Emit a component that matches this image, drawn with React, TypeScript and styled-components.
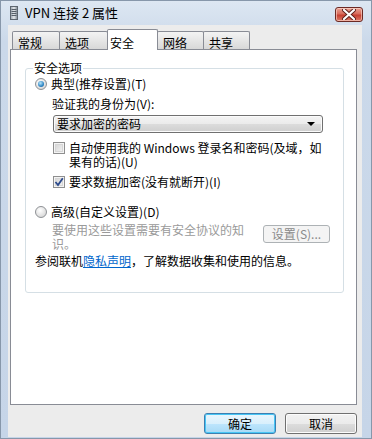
import * as React from "react";
import styled, { createGlobalStyle } from "styled-components";

const GlobalStyle = createGlobalStyle`
  html, body {
    margin: 0;
    padding: 0;
  }
  body {
    width: 372px;
    height: 439px;
    overflow: hidden;
    font-family: "Noto Sans CJK SC", "Liberation Sans", sans-serif;
    font-size: 12px;
    color: #000;
  }
`;

const tabs = [
  { label: "常规", width: 48 },
  { label: "选项", width: 49 },
  { label: "安全", width: 51, active: true },
  { label: "网络", width: 47 },
  { label: "共享", width: 47 },
];

const App = () => {
  return (
    <>
      <GlobalStyle />
      <Window>
        <TitleBar>
          <TitleIcon />
          <Title>VPN 连接 2 属性</Title>
          <CloseButton>
            <svg width="14" height="11" viewBox="0 0 14 11">
              <path d="M2 1 L12 10 M12 1 L2 10" stroke="#5a1f1a" strokeWidth="4" strokeLinecap="round" />
              <path d="M2 1 L12 10 M12 1 L2 10" stroke="#fff" strokeWidth="2.2" strokeLinecap="round" />
            </svg>
          </CloseButton>
        </TitleBar>

        <Client>
          <TabStrip>
            {tabs.map((t) => (
              <Tab key={t.label} $width={t.width} $active={!!t.active}>
                {t.label}
              </Tab>
            ))}
          </TabStrip>

          <Panel>
            <Group>
              <Legend>安全选项</Legend>

              <OptionRow>
                <Radio $checked />
                <span>典型(推荐设置)(T)</span>
              </OptionRow>

              <FieldLabel>验证我的身份为(V):</FieldLabel>
              <Select>
                <span>要求加密的密码</span>
                <Arrow />
              </Select>

              <CheckRow $top={8}>
                <CheckBox />
                <CheckText>
                  自动使用我的 Windows 登录名和密码(及域，如
                  <br />
                  果有的话)(U)
                </CheckText>
              </CheckRow>

              <CheckRow $top={6}>
                <CheckBox $checked>
                  <svg width="10" height="10" viewBox="0 0 10 10">
                    <path d="M1.5 5 L4 8 L8.8 1.2" fill="none" stroke="#2c4a8c" strokeWidth="1.8" />
                  </svg>
                </CheckBox>
                <CheckText>要求数据加密(没有就断开)(I)</CheckText>
              </CheckRow>

              <OptionRow $top={16}>
                <Radio />
                <span>高级(自定义设置)(D)</span>
              </OptionRow>

              <AdvancedRow>
                <GrayText>
                  要使用这些设置需要有安全协议的知
                  <br />
                  识。
                </GrayText>
                <SmallButton disabled>设置(S)...</SmallButton>
              </AdvancedRow>

              <InfoLine>
                参阅联机<Link>隐私声明</Link>，了解数据收集和使用的信息。
              </InfoLine>
            </Group>
          </Panel>

          <ButtonRow>
            <DialogButton $primary>确定</DialogButton>
            <DialogButton>取消</DialogButton>
          </ButtonRow>
        </Client>
      </Window>
    </>
  );
};

const TitleIcon = () => (
  <svg width="8" height="14" viewBox="0 0 8 14">
    <defs>
      <linearGradient id="tower" x1="0" x2="1">
        <stop offset="0" stopColor="#9aa3ad" />
        <stop offset="0.5" stopColor="#e4e8ec" />
        <stop offset="1" stopColor="#7c8690" />
      </linearGradient>
    </defs>
    <rect x="0.5" y="0.5" width="7" height="13" fill="url(#tower)" stroke="#5d6670" />
    <path d="M1.5 3.5 H6.5 M1.5 5.5 H6.5 M1.5 7.5 H6.5 M1.5 9.5 H6.5" stroke="#57606a" strokeWidth="1" />
  </svg>
);

const Window = styled.div`
  width: 372px;
  height: 439px;
  box-sizing: border-box;
  display: flex;
  flex-direction: column;
  background: linear-gradient(#dde7f2, #cbd9ea 40px, #c6d5e8);
  border: 1px solid #8797aa;
  padding: 0 9px 1px 7px;
`;

const TitleBar = styled.div`
  height: 24px;
  display: flex;
  align-items: center;
  padding-left: 2px;
`;

const Title = styled.div`
  margin-left: 7px;
  font-size: 13px;
  line-height: 16px;
  color: #000;
`;

const CloseButton = styled.div`
  margin-left: auto;
  margin-right: -1px;
  margin-top: 2px;
  width: 28px;
  height: 15px;
  box-sizing: border-box;
  border: 1px solid #6b2a24;
  border-radius: 3px;
  background: linear-gradient(#e9a294, #d86c5c 45%, #c63f31 55%, #dc7a66);
  box-shadow: inset 0 0 0 1px rgba(255, 220, 210, 0.6);
  display: flex;
  align-items: center;
  justify-content: center;
`;

const Client = styled.div`
  flex: 1;
  display: flex;
  flex-direction: column;
  background: #ececec;
  padding: 4px 5px 0 2px;
`;

const TabStrip = styled.div`
  height: 20px;
  display: flex;
  align-items: flex-end;
  padding-left: 2px;
`;

const Tab = styled.div<{ $width: number; $active: boolean }>`
  position: relative;
  box-sizing: border-box;
  width: ${(p) => p.$width}px;
  height: ${(p) => (p.$active ? 21 : 18)}px;
  margin-right: -1px;
  margin-bottom: ${(p) => (p.$active ? -1 : 0)}px;
  padding: ${(p) => (p.$active ? "6px 0 0 2px" : "4px 0 0 5px")};
  line-height: 13px;
  border: 1px solid #898c95;
  border-bottom: none;
  border-radius: 2px 2px 0 0;
  background: ${(p) =>
    p.$active ? "#fff" : "linear-gradient(#f3f3f3, #e6e6e6 50%, #d8d8d8)"};
  z-index: ${(p) => (p.$active ? 1 : 0)};
`;

const Panel = styled.div`
  height: 356px;
  box-sizing: border-box;
  border: 1px solid #898c95;
  background: #fff;
  padding: 12px 12px 0 14px;
`;

const Group = styled.fieldset`
  margin: 0;
  min-width: 0;
  border: 1px solid #d5dfe5;
  border-radius: 3px;
  padding: 3px 10px 24px 9px;
  display: flex;
  flex-direction: column;
`;

const Legend = styled.legend`
  padding: 0 1px;
  margin-left: -2px;
  line-height: 12px;
`;

const OptionRow = styled.div<{ $top?: number }>`
  display: flex;
  align-items: center;
  gap: 4px;
  height: 14px;
  line-height: 14px;
  margin-top: ${(p) => p.$top ?? 0}px;
`;

const Radio = styled.span<{ $checked?: boolean }>`
  position: relative;
  width: 12px;
  height: 12px;
  box-sizing: border-box;
  border-radius: 50%;
  border: 1px solid #8e9195;
  background: radial-gradient(circle at 40% 35%, #ffffff, #dcdcdc 70%, #c8c8c8);
  flex: none;

  &::after {
    content: "";
    display: ${(p) => (p.$checked ? "block" : "none")};
    position: absolute;
    left: 2px;
    top: 2px;
    width: 6px;
    height: 6px;
    border-radius: 50%;
    background: radial-gradient(circle at 40% 35%, #b9e6fb, #2f86c4 60%, #124d85);
  }
`;

const FieldLabel = styled.div`
  margin: 6px 0 0 17px;
  line-height: 14px;
`;

const Select = styled.div`
  margin: 4px 0 0 18px;
  width: 270px;
  height: 18px;
  box-sizing: border-box;
  border: 1px solid #707070;
  border-radius: 3px;
  background: linear-gradient(#f4f4f4, #ebebeb 50%, #dcdcdc 50%, #cfcfcf);
  box-shadow: inset 0 0 0 1px #fbfbfb;
  display: flex;
  align-items: center;
  padding: 0 7px 0 3px;
  line-height: 14px;

  span {
    flex: 1;
  }
`;

const Arrow = styled.span`
  flex: none !important;
  width: 0;
  height: 0;
  border-left: 4px solid transparent;
  border-right: 4px solid transparent;
  border-top: 4px solid #000;
`;

const CheckRow = styled.div<{ $top: number }>`
  display: flex;
  align-items: flex-start;
  gap: 4px;
  margin: ${(p) => p.$top}px 0 0 18px;
`;

const CheckBox = styled.span<{ $checked?: boolean }>`
  width: 12px;
  height: 12px;
  box-sizing: border-box;
  margin-top: 1px;
  border: 1px solid #8f8f8f;
  background: #fff;
  box-shadow: inset 0 0 0 1px #f4f4f4, inset 0 0 0 2px #d6d6d6;
  background-image: linear-gradient(135deg, #d2d2d2, #f6f6f6);
  flex: none;
  display: flex;
  align-items: center;
  justify-content: center;
`;

const CheckText = styled.div`
  line-height: 14px;
`;

const AdvancedRow = styled.div`
  display: flex;
  align-items: flex-start;
  margin: 4px 0 0 17px;
`;

const GrayText = styled.div`
  width: 205px;
  line-height: 14px;
  color: #9a9a9a;
`;

const SmallButton = styled.button`
  margin: 2px 0 0 6px;
  width: 67px;
  height: 18px;
  box-sizing: border-box;
  padding: 0;
  border: 1px solid #adb2b5;
  border-radius: 3px;
  background: #f4f4f4;
  color: #8a8a8a;
  font-family: inherit;
  font-size: 12px;
  line-height: 14px;
`;

const InfoLine = styled.div`
  margin-top: 3px;
  line-height: 14px;
`;

const Link = styled.span`
  color: #0066cc;
  text-decoration: underline;
`;

const ButtonRow = styled.div`
  display: flex;
  justify-content: flex-end;
  gap: 9px;
  margin-top: 8px;
`;

const DialogButton = styled.button<{ $primary?: boolean }>`
  width: 72px;
  height: 21px;
  box-sizing: border-box;
  padding: 0;
  border-radius: 3px;
  font-family: inherit;
  font-size: 12px;
  line-height: 14px;
  color: #000;
  border: 1px solid ${(p) => (p.$primary ? "#3c7fb1" : "#707070")};
  background: ${(p) =>
    p.$primary
      ? "linear-gradient(#eaf6fd, #d9f0fc 50%, #bee6fd 50%, #a7d9f5)"
      : "linear-gradient(#f2f2f2, #ebebeb 50%, #dddddd 50%, #cfcfcf)"};
  box-shadow: inset 0 0 0 1px ${(p) => (p.$primary ? "#48c6f5" : "#fcfcfc")};
`;

export default App;
